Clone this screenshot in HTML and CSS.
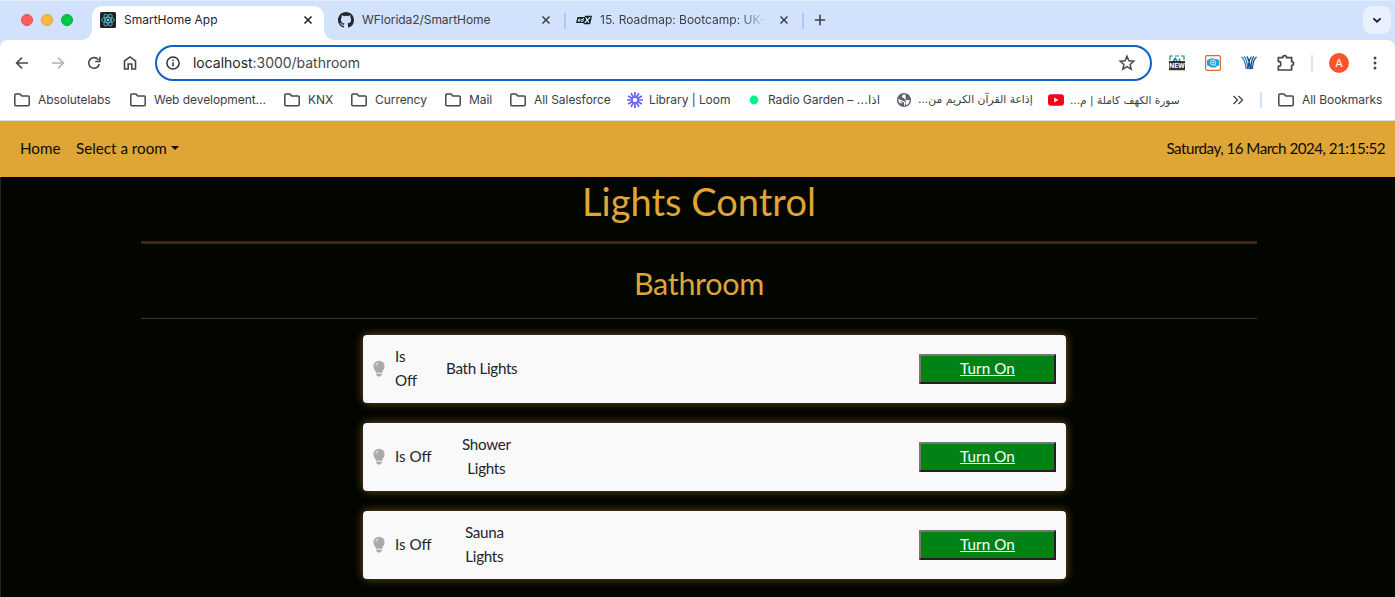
FILE: index.html
```html
<!DOCTYPE html>
<html lang="en">
<head>
<meta charset="utf-8">
<title>SmartHome App</title>
<link rel="stylesheet" href="styles.css">
</head>
<body>
<svg class="defs" width="0" height="0">
  <symbol id="folder" viewBox="0 0 16 16"><path d="M.8 3Q.8 2 1.8 2H6L7.8 4H14.2Q15.2 4 15.2 5V12.8Q15.2 13.8 14.2 13.8H1.8Q.8 13.8 .8 12.8Z" fill="none" stroke="#474747" stroke-width="1.5"/></symbol>
  <symbol id="close" viewBox="0 0 10 10"><path d="M1.5 1.5l7 7M8.5 1.5l-7 7" stroke="currentColor" stroke-width="1.5" fill="none"/></symbol>
  <symbol id="bulb" viewBox="0 0 12 18"><path d="M6 .7A5.6 5.6 0 0 0 .4 6.3C.4 9.4 2.6 10.2 3 12.7H9C9.4 10.2 11.6 9.4 11.6 6.3A5.6 5.6 0 0 0 6 .7ZM3 13.8H9V14.6Q9 15.1 8.3 15.3L7.4 16.5H4.6L3.7 15.3Q3 15.1 3 14.6Z" fill="#a9a9a9"/><path d="M2.8 6.2A3.2 3.2 0 0 1 6 3" fill="none" stroke="#f9f9f9" stroke-width=".8"/></symbol>
</svg>

<header class="browser">
  <div class="tabstrip">
    <div class="lights"><i class="red"></i><i class="amber"></i><i class="green"></i></div>
    <div class="tab active">
      <svg class="fav" viewBox="0 0 16 16"><rect width="16" height="16" rx="1.5" fill="#222"/><g fill="none" stroke="#4fb5cb" stroke-width=".9"><ellipse cx="8" cy="8" rx="6.5" ry="2.6"/><ellipse cx="8" cy="8" rx="6.5" ry="2.6" transform="rotate(60 8 8)"/><ellipse cx="8" cy="8" rx="6.5" ry="2.6" transform="rotate(120 8 8)"/></g><circle cx="8" cy="8" r="1.3" fill="#61dafb"/></svg>
      <span class="tab-title t1">SmartHome App</span>
      <svg class="close"><use href="#close"/></svg>
    </div>
    <div class="tab github">
      <svg class="fav" viewBox="0 0 16 16"><path fill="#24292f" d="M8 0C3.58 0 0 3.58 0 8c0 3.54 2.29 6.53 5.47 7.59.4.07.55-.17.55-.38 0-.19-.01-.82-.01-1.49-2.01.37-2.53-.49-2.69-.94-.09-.23-.48-.94-.82-1.13-.28-.15-.68-.52-.01-.53.63-.01 1.08.58 1.23.82.72 1.21 1.87.87 2.33.66.07-.52.28-.87.51-1.07-1.78-.2-3.64-.89-3.64-3.95 0-.87.31-1.59.82-2.15-.08-.2-.36-1.02.08-2.12 0 0 .67-.21 2.2.82a7.6 7.6 0 0 1 4 0c1.53-1.04 2.2-.82 2.2-.82.44 1.1.16 1.92.08 2.12.51.56.82 1.27.82 2.15 0 3.07-1.87 3.75-3.65 3.95.29.25.54.73.54 1.48 0 1.07-.01 1.93-.01 2.2 0 .21.15.46.55.38A8 8 0 0 0 16 8c0-4.42-3.58-8-8-8z"/></svg>
      <span class="tab-title t2">WFlorida2/SmartHome</span>
      <svg class="close"><use href="#close"/></svg>
    </div>
    <i class="divider"></i>
    <div class="tab edx">
      <svg class="fav" viewBox="0 0 16 16"><path d="M1.5 5H10L9 11H0ZM9 3.7H16L14.2 12.3H7.5Z" fill="#07262b"/><g stroke="#fff" fill="none" stroke-width=".8"><path d="M4 8.4H2.2Q2.3 7 3.4 7T4 8.4M2.2 8.4Q2.2 9.7 3.8 9.5M7.6 6L6.8 9.6M7 7.4Q5.2 6.6 5 8.4T6.8 9.2"/><path d="M9.7 5.4L12.9 10.8M14.2 5.2L8.7 10.8" stroke-width="1.1"/></g></svg>
      <span class="tab-title t3">15. Roadmap: Bootcamp: UK-</span>
      <svg class="close"><use href="#close"/></svg>
    </div>
    <i class="divider"></i>
    <svg class="plus" viewBox="0 0 12 12"><path d="M6 .8V11.2M.8 6H11.2" stroke="#3c4043" stroke-width="1.6"/></svg>
    <div class="tab-search"><svg viewBox="0 0 10 10"><path d="M1.4 3.3L5 6.7L8.6 3.3" fill="none" stroke="#1f1f1f" stroke-width="1.8"/></svg></div>
  </div>

  <div class="toolbar">
    <div class="nav-icons">
      <svg viewBox="0 0 16 16"><path d="M14 8H2.8M8 2.6L2.6 8L8 13.4" fill="none" stroke="#474747" stroke-width="1.6"/></svg>
      <svg viewBox="0 0 16 16"><path d="M2 8H13.2M8 2.6L13.4 8L8 13.4" fill="none" stroke="#b0b0b0" stroke-width="1.5"/></svg>
      <svg viewBox="0 0 16 16"><path d="M13.2 9A5.3 5.3 0 1 1 12.5 5.1" fill="none" stroke="#474747" stroke-width="1.6"/><path d="M13.9 1.8V6.5H9.2" fill="none" stroke="#474747" stroke-width="1.6"/></svg>
      <svg viewBox="0 0 16 16"><path d="M2.5 6L8 1.9L13.5 6V14H9.8V9H6.2V14H2.5Z" fill="none" stroke="#474747" stroke-width="1.6"/></svg>
    </div>
    <div class="address">
      <svg class="info" viewBox="0 0 16 16"><circle cx="8" cy="8" r="6.1" fill="none" stroke="#303134" stroke-width="1.5"/><path d="M8 7.3V11.2M8 4.5V6" stroke="#303134" stroke-width="1.5"/></svg>
      <span class="url"><b>localhost</b>:3000/bathroom</span>
      <svg class="star" viewBox="0 0 18 18"><path d="M9 2.3L10.9 6.8L15.8 7.2L12.1 10.4L13.2 15.2L9 12.6L4.8 15.2L5.9 10.4L2.2 7.2L7.1 6.8Z" fill="none" stroke="#474747" stroke-width="1.5"/></svg>
    </div>
    <div class="extensions">
      <svg viewBox="0 0 16 16"><path d="M1 5V1H4M6 1H10M12 1H15V5" fill="none" stroke="#168c98" stroke-width="1.2"/><path d="M4.5 6L6.2 3.4L8 6M10.5 3.4V6" fill="none" stroke="#168c98" stroke-width="1.6"/><rect y="6" width="16" height="9.2" fill="#333"/><text x="8" y="13.1" text-anchor="middle" class="new-label">NEW</text></svg>
      <svg viewBox="0 0 16 16"><rect x=".6" y=".6" width="14.8" height="14.8" rx="1.5" fill="#fff" stroke="#df6a31" stroke-width="1.2"/><path d="M2 6Q2 4.6 4 4.6L5 3.4H9L10 4.2H12.5Q14.2 4.2 14.2 6V9.5Q14.2 11.2 12 11.2L10.5 12.4H6L4.5 11.2Q2 11.2 2 9.5Z" fill="#1aa3e3"/><circle cx="8" cy="7.6" r="2.5" fill="#1a8bd0" stroke="#fff" stroke-width=".9"/><path d="M8 6.5V8.7M6.9 7.6H9.1M9.8 9.5L11.5 11.2" stroke="#fff" stroke-width=".8"/></svg>
      <svg viewBox="0 0 16 16"><g fill="none" stroke-width="1.3"><path d="M.4 2Q4 4 5.2 14M3 1.4Q6.6 5 6.6 14" stroke="#2185bc"/><path d="M5.8 1.5Q9 6 9 14.5M15.6 2Q12 4 11.4 14M13 1.4Q9.8 5 10 14M10.5 1.5Q7.4 6 7 14" stroke="#184a91"/></g></svg>
      <svg class="puzzle" viewBox="0 0 16 16"><path d="M1.2 3.2H5.1A1.7 1.7 0 0 1 8.5 3.2H13V6.8A1.7 1.7 0 0 1 13 10.2V14.2H1.2V11A2.2 2.2 0 0 0 1.2 6.6Z" fill="none" stroke="#474747" stroke-width="1.5"/></svg>
      <i class="divider light"></i>
      <span class="avatar">A</span>
      <svg class="dots" viewBox="0 0 4 16"><g fill="#474747"><circle cx="2" cy="3" r="1.5"/><circle cx="2" cy="8" r="1.5"/><circle cx="2" cy="13" r="1.5"/></g></svg>
    </div>
  </div>

  <nav class="bookmarks">
    <a class="bm b1"><svg><use href="#folder"/></svg><span>Absolutelabs</span></a>
    <a class="bm b2"><svg><use href="#folder"/></svg><span>Web development...</span></a>
    <a class="bm b3"><svg><use href="#folder"/></svg><span>KNX</span></a>
    <a class="bm b4"><svg><use href="#folder"/></svg><span>Currency</span></a>
    <a class="bm b5"><svg><use href="#folder"/></svg><span>Mail</span></a>
    <a class="bm b6"><svg><use href="#folder"/></svg><span>All Salesforce</span></a>
    <a class="bm b7 tight"><svg viewBox="0 0 16 16"><g stroke="#625df5" stroke-width="1.7"><path d="M8 0V16M0 8H16M4 1.1L12 14.9M12 1.1L4 14.9M1.1 4L14.9 12M1.1 12L14.9 4"/></g><circle cx="8" cy="8" r="3.3" fill="#625df5"/><circle cx="8" cy="8" r="2.3" fill="#fff"/></svg><span>Library | Loom</span></a>
    <a class="bm b8 tight"><svg viewBox="0 0 16 16"><circle cx="8" cy="8" r="4.4" fill="#00f08a"/></svg><span>Radio Garden – <bdo class="ar" dir="ltr">...</bdo><span class="ar" dir="rtl">اذا</span></span></a>
    <a class="bm b9 tight"><svg viewBox="0 0 16 16"><circle cx="8" cy="8" r="7.1" fill="#5f6368"/><path d="M9.4 2.3Q6.3 2 6 4.4Q6 6 8 6Q8.3 8 10.3 8H13.6Q13.7 12.2 9.2 13.7L8.8 12.3Q10.5 11 9 9.9Q8 8.6 6.6 8.8L2.4 6.8Q2 9 3.4 11L6 11.6L6.6 10.6H5.2L3.9 9.4L7.4 9.7Q8.6 10.8 8 13.8L10 13.4Z" fill="#fff"/></svg><span class="ar" dir="rtl">إذاعة القرآن الكريم من...</span></a>
    <a class="bm b10 tight"><svg viewBox="0 0 16 16"><rect y="2.3" width="16" height="11.4" rx="3" fill="#f8021b"/><path d="M6.2 5.6V10.4L10.3 8Z" fill="#fff"/></svg><span class="ar" dir="rtl">سورة الكهف كاملة | م...</span></a>
    <svg class="more" viewBox="0 0 12 10"><path d="M1.5 1L5.5 5L1.5 9M6.5 1L10.5 5L6.5 9" fill="none" stroke="#474747" stroke-width="1.4"/></svg>
    <i class="divider light"></i>
    <a class="bm all"><svg><use href="#folder"/></svg><span>All Bookmarks</span></a>
  </nav>
</header>

<div class="page">
  <nav class="navbar">
    <a class="home">Home</a>
    <a class="select">Select a room</a><i class="caret"></i>
    <time>Saturday, 16 March 2024, 21:15:52</time>
  </nav>
  <main>
    <h1>Lights Control</h1>
    <hr class="thick">
    <h2>Bathroom</h2>
    <hr>
    <section class="cards">
      <article class="card">
        <svg class="bulb"><use href="#bulb"/></svg><span class="state narrow">Is<br>Off</span><span class="name bath">Bath Lights</span><button>Turn On</button>
      </article>
      <article class="card">
        <svg class="bulb"><use href="#bulb"/></svg><span class="state">Is Off</span><span class="name shower">Shower<br>Lights</span><button>Turn On</button>
      </article>
      <article class="card">
        <svg class="bulb"><use href="#bulb"/></svg><span class="state">Is Off</span><span class="name sauna">Sauna<br>Lights</span><button>Turn On</button>
      </article>
    </section>
  </main>
</div>
</body>
</html>
```
FILE: styles.css
```css
* { box-sizing: border-box; }
body { margin: 0; height: 597px; overflow: hidden; background: #020500; font-family: Inter, sans-serif; }
svg { display: block; flex: none; }
.defs { position: absolute; }

/* Browser window */
.browser { height: 121px; background: #d2e2fc; border-bottom: 1px solid #dcdcdc; font-size: 12px; color: #3c4043; }
.tabstrip { height: 40px; display: flex; align-items: center; border-top: 1px solid #e2ecfd; }
.lights { display: flex; gap: 8px; width: 92px; padding: 0 0 1px 21px; }
.lights i { width: 12px; height: 12px; border-radius: 50%; }
.red { background: #fe5f57; border: 1px solid #e3504a; }
.amber { background: #febb40; border: 1px solid #e0a135; }
.green { background: #00c842; border: 1px solid #04ad3c; }
.tab { display: flex; align-items: center; height: 34px; padding: 0 11px 1px 8px; gap: 8px; }
.tab.active { position: relative; width: 232px; height: 34px; align-self: flex-end; background: #fff; color: #1f1f1f; border-radius: 10px 10px 0 0; padding-bottom: 6px; }
.tab.active::before, .tab.active::after { content: ""; position: absolute; bottom: 0; width: 10px; height: 10px; }
.tab.active::before { left: -10px; background: radial-gradient(circle at 0 0, transparent 9.5px, #fff 10px); }
.tab.active::after { right: -10px; background: radial-gradient(circle at 100% 0, transparent 9.5px, #fff 10px); }
.tab.github { width: 240px; padding: 0 13px 1px 14px; }
.tab.edx { width: 236px; padding: 0 13px 1px 10px; }
.fav { width: 16px; height: 16px; }
.tab-title { flex: 1; white-space: nowrap; padding-bottom: 1px; }
.t2 { letter-spacing: -.06px; }
.t3 { -webkit-mask-image: linear-gradient(90deg, #000 82%, transparent 97%); mask-image: linear-gradient(90deg, #000 82%, transparent 97%); }
.close { width: 10px; height: 10px; }
.divider { flex: none; width: 2px; height: 16px; background: #a8c7fa; }
.divider.light { background: #d3e3fd; }
.plus { width: 12px; height: 12px; margin: 0 0 1px 10px; }
.tab-search { display: grid; place-items: center; width: 28px; height: 28px; margin: 0 4px 1px auto; border-radius: 9px; background: #e9f1fe; }
.tab-search svg { width: 10px; height: 10px; }

.toolbar { height: 44px; display: flex; align-items: center; background: #fff; border-radius: 8px 8px 0 0; padding-top: 2px; }
.nav-icons { display: flex; gap: 20px; width: 155px; padding-left: 14px; }
.nav-icons svg { width: 16px; height: 16px; }
.address { display: flex; align-items: center; width: 997px; height: 36px; border: 2px solid #0b62cb; border-radius: 18px; padding: 0 14px 0 8px; }
.info { width: 16px; height: 16px; margin-right: 12px; }
.url { flex: 1; font-size: 14px; color: #474747; padding-bottom: 1px; letter-spacing: -.03px; }
.url b { font-weight: 400; color: #1f1f1f; }
.star { width: 18px; height: 18px; }
.extensions { display: flex; align-items: center; gap: 20px; padding-left: 17px; }
.extensions > svg { width: 16px; height: 16px; }
.new-label { font: 700 6.5px Inter, sans-serif; fill: #fff; }
.extensions .puzzle { width: 18px; height: 18px; margin-right: -1px; }
.extensions .divider { margin: 0 -4px 0 -3px; }
.avatar { display: grid; place-items: center; width: 20px; height: 20px; border-radius: 50%; background: #ff5330; color: #fff; font-size: 11px; }
.extensions .dots { width: 4px; margin-left: 4px; }

.bookmarks { height: 36px; display: flex; align-items: center; background: #fff; padding: 0 0 4px 14px; letter-spacing: -.06px; }
.bm { display: flex; align-items: center; gap: 8px; flex: none; white-space: nowrap; }
.bm > span { padding-bottom: 1px; }
.bm svg { width: 16px; height: 16px; }
.bm.tight { gap: 6px; }
.b1 { width: 116px; } .b2 { width: 154px; } .b3 { width: 67px; } .b4 { width: 94px; } .b5 { width: 65px; }
.b6 { width: 117px; } .b7 { width: 119px; } .b8 { width: 150px; } .b9 { width: 152px; } .b10 { width: 184px; }
.ar { font-family: "DejaVu Sans", sans-serif; font-size: 10.8px; letter-spacing: 0; }
.b8 .ar { font-size: 12px; }
.b10 .ar { font-size: 10.6px; }
.more { width: 12px; height: 10px; margin-right: 16px; }
.bookmarks .divider { margin-right: 16px; }

/* Smart home app */
.page { height: 476px; border-left: 1px solid #23251f; font-family: "Gill Sans", Lato, sans-serif; font-size: 15.2px; line-height: 24px; color: #212529; }
.navbar { display: flex; align-items: center; height: 56px; margin-left: -1px; padding: 0 10px 2px 20px; background: #dfa537; color: #0c0b05; }
.home { width: 56px; }
.caret { border: 4.5px solid transparent; border-top-color: #0c0b05; border-bottom: 0; margin-left: 4px; }
.navbar time { margin-left: auto; letter-spacing: -.53px; }
main { width: 1116px; margin-left: 140px; text-align: center; }
h1, h2 { margin: 0; font-weight: 400; color: #dfa537; }
h1 { font-size: 38px; line-height: 48px; padding-bottom: 1px; }
h2 { font-size: 30.5px; line-height: 36px; padding-bottom: 2px; letter-spacing: -.3px; }
hr { margin: 15px 0 16px; border: 0; height: 1px; background: #353733; }
hr.thick { height: 3px; margin: 15px 0 21px; background: #3b2c11; }
.cards { display: flex; flex-direction: column; gap: 20px; width: 703px; margin-left: 222px; }
.card { display: flex; align-items: center; height: 68px; padding: 0 10px; background: #f9f9f9; border-radius: 4px; box-shadow: 0 0 10px rgba(223,165,55,.5); }
.bulb { width: 12px; height: 18px; margin-right: 10px; }
.state { width: 55px; text-align: left; white-space: nowrap; padding-bottom: 2px; }
.name { margin-left: 12px; white-space: nowrap; letter-spacing: -.3px; padding-bottom: 2px; }
.state.narrow { width: 39px; }
.name.sauna { margin-left: 15px; }
.card button { width: 137px; height: 30px; margin-left: auto; padding: 0 0 2px; border: 2px solid; border-color: #767676 #212121 #212121 #767676; background: #008217; color: #fff; font: inherit; line-height: 24px; letter-spacing: .1px; text-decoration: underline; }
```
